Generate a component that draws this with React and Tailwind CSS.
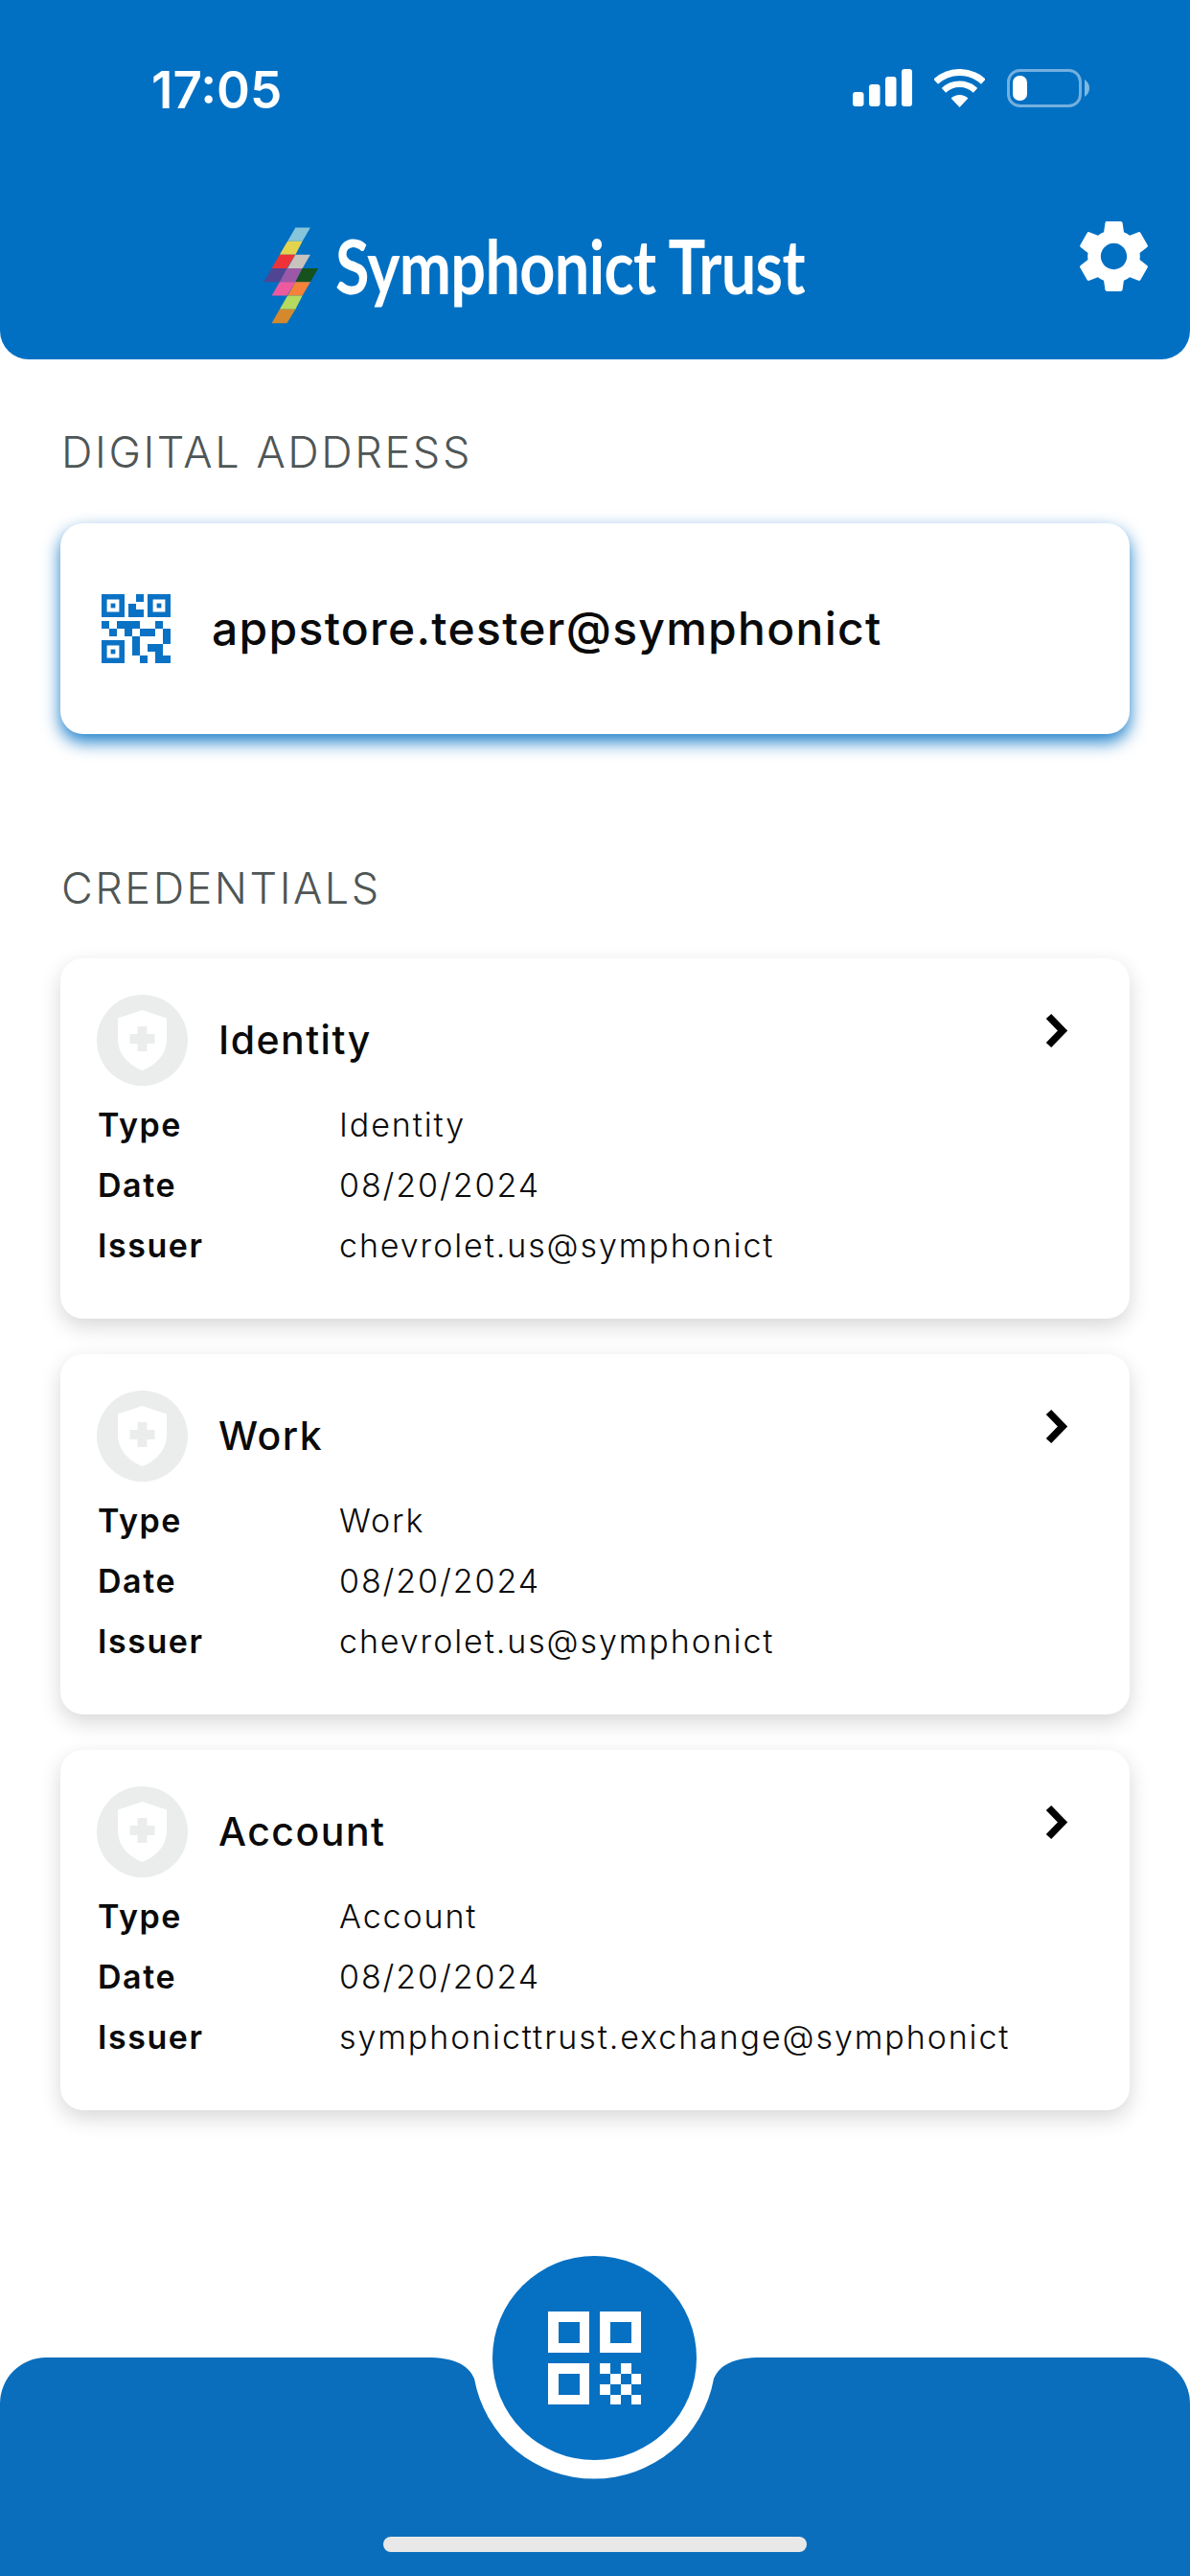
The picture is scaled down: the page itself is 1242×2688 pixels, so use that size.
import React from 'react';

const CREDENTIALS = [
  { key: 'identity', title: 'Identity', type: 'Identity', date: '08/20/2024', issuer: 'chevrolet.us@symphonict' },
  { key: 'work', title: 'Work', type: 'Work', date: '08/20/2024', issuer: 'chevrolet.us@symphonict' },
  { key: 'account', title: 'Account', type: 'Account', date: '08/20/2024', issuer: 'symphonicttrust.exchange@symphonict' },
];

const SignalIcon = () => (
  <svg width="62" height="39" viewBox="0 0 62 39" fill="#fff">
    <rect x="0" y="24" width="11.5" height="15" rx="3" />
    <rect x="17" y="16" width="11.5" height="23" rx="3" />
    <rect x="34" y="8" width="11.5" height="31" rx="3" />
    <rect x="51" y="0" width="11" height="39" rx="3" />
  </svg>
);

const WifiIcon = () => (
  <svg width="53" height="40" viewBox="0 0 53 40" fill="none" stroke="#fff">
    <path d="M1.6 13.3A36.5 36.5 0 0 1 51.4 13.3" strokeWidth="7" />
    <path d="M10 22.3A24.2 24.2 0 0 1 43 22.3" strokeWidth="6.4" />
    <path d="M26.5 40L17.6 30.4A13 13 0 0 1 35.4 30.4Z" fill="#fff" stroke="none" />
  </svg>
);

const BatteryIcon = () => (
  <svg width="86" height="40" viewBox="0 0 86 40" fill="none">
    <rect x="1.5" y="1.5" width="75" height="37" rx="12" stroke="#ffffff" strokeOpacity="0.45" strokeWidth="3" />
    <rect x="6" y="7" width="15" height="26" rx="7" fill="#fff" />
    <path d="M81 11C84 13 86 16 86 20C86 24 84 27 81 29Z" fill="#ffffff" fillOpacity="0.5" />
  </svg>
);

// coordinates follow the logo's colour rows, 43 units per row
const LogoBolt = () => (
  <svg width="57.5" height="101" viewBox="104 80 174 303" className="shrink-0">
    <polygon points="205,80 252,80 227,123 180,123" fill="#86c5da" />
    <polygon points="180,123 227,123 205,166 155,166" fill="#e3d44f" />
    <polygon points="155,166 205,166 178,209 130,209" fill="#ee3338" />
    <polygon points="205,166 252,166 227,209 180,209" fill="#c8c3bd" />
    <polygon points="130,209 178,209 155,252 105,252" fill="#4f4592" />
    <polygon points="178,209 227,209 205,252 155,252" fill="#9b58a6" />
    <polygon points="227,209 277,209 252,252 205,252" fill="#16521e" />
    <polygon points="155,252 205,252 178,295 130,295" fill="#ee5a9f" />
    <polygon points="205,252 252,252 227,295 180,295" fill="#f58238" />
    <polygon points="180,295 227,295 205,338 155,338" fill="#b5da5f" />
    <polygon points="155,338 205,338 178,382 130,382" fill="#d48a2c" />
  </svg>
);

const GearIcon = () => (
  <svg width="91" height="91" viewBox="0 0 24 24" fill="#fff" className="shrink-0">
    <path d="M19.14 12.94c.04-.3.06-.61.06-.94 0-.32-.02-.64-.07-.94l2.03-1.58a.49.49 0 0 0 .12-.61l-1.92-3.32a.488.488 0 0 0-.59-.22l-2.39.96c-.5-.38-1.03-.7-1.62-.94l-.36-2.54a.484.484 0 0 0-.48-.41h-3.84c-.24 0-.43.17-.47.41l-.36 2.54c-.59.24-1.13.57-1.62.94l-2.39-.96c-.22-.08-.47 0-.59.22L2.74 8.87c-.12.21-.08.47.12.61l2.03 1.58c-.05.3-.09.63-.09.94s.02.64.07.94l-2.03 1.58a.49.49 0 0 0-.12.61l1.92 3.32c.12.22.37.29.59.22l2.39-.96c.5.38 1.03.7 1.62.94l.36 2.54c.05.24.24.41.48.41h3.84c.24 0 .44-.17.47-.41l.36-2.54c.59-.24 1.13-.56 1.62-.94l2.39.96c.22.08.47 0 .59-.22l1.92-3.32c.12-.22.07-.47-.12-.61l-2.01-1.58zM12 15.6c-1.98 0-3.6-1.62-3.6-3.6s1.62-3.6 3.6-3.6 3.6 1.62 3.6 3.6-1.62 3.6-3.6 3.6z" />
  </svg>
);

const Finder = ({ x, y }) => (
  <g>
    <path fillRule="evenodd" d={`M${x} ${y}h6v6h-6zM${x + 1.4} ${y + 1.4}v3.2h3.2v-3.2z`} />
    <rect x={x + 2.4} y={y + 2.4} width="1.2" height="1.2" />
  </g>
);

const SmallQrIcon = () => (
  <svg width="72" height="72" viewBox="0 0 18 18" fill="#0a72c4" className="shrink-0">
    <Finder x={0} y={0} />
    <Finder x={12} y={0} />
    <Finder x={0} y={12} />
    <path d="M9 0h2v2H9zM7 2.5h2V4h2v2H7zM0 7h2v2H0zM4 7h6v2H8v2H6V9H4zM2 9h2v2H2zM10 9h4v2h-4zM14 7h2v2h-2zM16 9h2v4h-2zM8 11h2v5H8zM12 13h4v3h2v2h-4v-3h-2zM10 16h2v2h-2z" />
  </svg>
);

const LargeQrIcon = () => (
  <svg width="97" height="97" viewBox="0 0 97 97" fill="#fff">
    <path fillRule="evenodd" d="M0 0h43v43H0zM11 11v22h22V11zM54 0h43v43H54zM65 11v22h22V11zM0 54h43v43H0zM11 65v22h22V65z" />
    <path d="M54 54h11v11H54zM76 54h11v11H76zM65 65h11v11H65zM87 65h10v11H87zM54 76h11v11H54zM76 76h11v11H76zM65 87h11v10H65zM87 87h10v10H87z" />
  </svg>
);

const ShieldBadge = () => (
  <div className="flex h-[95px] w-[95px] shrink-0 items-center justify-center rounded-full bg-[#ebeded]">
    <svg width="51" height="63" viewBox="0 0 51 63">
      <path d="M25.5 0L51 8.5V30C51 45.5 40.5 57 25.5 63C10.5 57 0 45.5 0 30V8.5Z" fill="#fff" />
      <path d="M20.5 17h10v8h8v10h-8v8h-10v-8h-8V25h8z" fill="#ebeded" />
    </svg>
  </div>
);

const Chevron = () => (
  <svg width="30" height="56" viewBox="0 0 30 56" fill="none" stroke="#000" strokeWidth="7.5" className="mt-[10px] mr-[24px] shrink-0">
    <path d="M7.5 12.5L22 27.5L7.5 42.5" />
  </svg>
);

const SectionLabel = ({ children, className }) => (
  <h2 className={`text-[45px] leading-[54px] font-[350] text-[#4f5656] ${className}`}>{children}</h2>
);

const CredentialRow = ({ label, value }) => (
  <div className="flex text-[34px] leading-[63px] tracking-[0.046em] text-[#0a0a0a]">
    <div className="w-[252px] shrink-0 font-semibold">{label}</div>
    <div className="font-[350] tracking-[0.056em] whitespace-nowrap">{value}</div>
  </div>
);

const CredentialCard = ({ item }) => (
  <div className="rounded-[24px] bg-white pt-[38px] pr-[38px] pb-[44.5px] pl-[39px] shadow-[0_8px_22px_rgba(0,0,0,0.16)]">
    <div className="mb-[9px] flex items-start">
      <div className="ml-[-1px]"><ShieldBadge /></div>
      <div className="ml-[32px] flex-1 self-center text-[41px] font-medium tracking-[0.036em] text-[#0a0a0a]">{item.title}</div>
      <Chevron />
    </div>
    <CredentialRow label="Type" value={item.type} />
    <CredentialRow label="Date" value={item.date} />
    <CredentialRow label="Issuer" value={item.issuer} />
  </div>
);

export default function App() {
  return (
    <div className="flex h-[2688px] w-[1242px] flex-col overflow-hidden bg-white font-['Inter',sans-serif]">
      <header className="h-[375px] shrink-0 rounded-b-[30px] bg-[#0170c3] pt-[51px]">
        <div className="flex h-[65px] items-start justify-between pr-[105px] pl-[158px]">
          <span className="mt-[11px] text-[53px] leading-[65px] font-semibold text-white">17:05</span>
          <div className="mt-[21px] flex items-start gap-[23px]">
            <SignalIcon />
            <WifiIcon />
            <BatteryIcon />
          </div>
        </div>
        <div className="mt-[106px] flex items-start justify-between pr-[34px] pl-[275px]">
          <div className="flex items-start">
            <div className="mt-[15px]"><LogoBolt /></div>
            <span className="ml-[17px] origin-left scale-x-[0.83] font-['Lato',sans-serif] text-[78px] leading-[110px] font-bold tracking-[-0.01em] whitespace-nowrap text-white">
              Symphonict Trust
            </span>
          </div>
          <GearIcon />
        </div>
      </header>

      <main className="min-h-0 flex-1 px-[63px] pt-[70px]">
        <SectionLabel className="pl-[1px] tracking-[0.058em]">DIGITAL ADDRESS</SectionLabel>
        <div className="mt-[47px] flex h-[220px] items-center gap-[43px] rounded-[24px] bg-white pl-[43px] shadow-[0_8px_18px_rgba(1,112,195,0.9)]">
          <SmallQrIcon />
          <span className="text-[48px] font-medium tracking-[0.027em] text-[#0a0a0a]">appstore.tester@symphonict</span>
        </div>
        <SectionLabel className="mt-[134px] pl-[1px] tracking-[0.056em]">CREDENTIALS</SectionLabel>
        <div className="mt-[46px] flex flex-col gap-[37.5px]">
          {CREDENTIALS.map((item) => (
            <CredentialCard key={item.key} item={item} />
          ))}
        </div>
      </main>

      <footer className="relative flex h-[228px] shrink-0 items-end justify-center pb-[25px]">
        <svg className="absolute inset-0" width="1242" height="228" viewBox="0 0 1242 228" fill="#0a6ebd">
          <path d="M0 228V48A48 48 0 0 1 48 0H445C475 0 489 8 495 22A127 127 0 0 0 745 22C751 8 765 0 795 0H1194A48 48 0 0 1 1242 48V228Z" />
        </svg>
        <button className="absolute top-[-106px] left-[513.5px] flex h-[213px] w-[213px] items-center justify-center rounded-full bg-[#0670c2]">
          <LargeQrIcon />
        </button>
        <div className="relative h-[16px] w-[442px] rounded-full bg-[#e8e8e8]" />
      </footer>
    </div>
  );
}
